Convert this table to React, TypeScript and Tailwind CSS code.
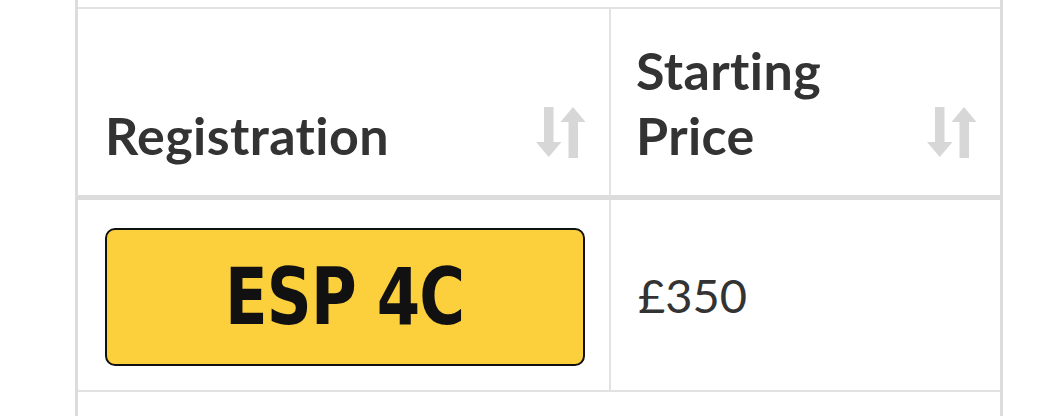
import React from "react";

function SortIcon() {
  return (
    <svg width="50" height="51" viewBox="0 0 50 51" className="absolute right-[23px] bottom-[37px]">
      <g fill="#d7d7d7">
        <rect x="8" y="0" width="9.5" height="37" />
        <polygon points="0,35 25.5,35 12.75,50" />
        <polygon points="37,0 49.5,15 24.5,15" />
        <rect x="32.5" y="14" width="9.5" height="37" />
      </g>
    </svg>
  );
}

export default function App() {
  const head = "font-['Lato','Open_Sans',sans-serif] font-bold text-[52px] tracking-[0.4px] leading-[65px] text-[#333333]";
  return (
    <div className="w-[1055px] h-[416px] bg-white overflow-hidden">
      <div className="ml-[75px] w-[928px] h-[416px] border-x-[3px] border-[#dcdcdc] pt-[7px]">
        <div className="border-t-2 border-[#e2e2e2]">
          <div className="flex h-[191px] border-b-[5px] border-[#dcdcdc]">
            <div className="relative w-[533px] shrink-0 flex items-end pl-[27px] pr-[27px] pb-[27px] border-r-2 border-[#e2e2e2]">
              <div className={head}>Registration</div>
              <SortIcon />
            </div>
            <div className="relative flex-1 flex items-end pl-[25px] pr-[27px] pb-[27px]">
              <div className={head}>
                Starting
                <br />
                Price
              </div>
              <SortIcon />
            </div>
          </div>
          <div className="flex h-[192px] border-b-2 border-[#e2e2e2]">
            <div className="w-[533px] shrink-0 flex items-start pl-[27px] pt-[28px] border-r-2 border-[#e2e2e2]">
              <div className="w-[480px] h-[138px] bg-[#fcd03c] border-[2.5px] border-[#111111] rounded-[10px] flex items-center justify-center">
                <span className="inline-block [transform:scaleX(0.8)] font-['DejaVu_Sans',sans-serif] font-bold text-[78px] leading-none text-[#111111] tracking-[-1px]">
                  ESP 4C
                </span>
              </div>
            </div>
            <div className="flex-1 flex items-center px-[27px]">
              <span className="font-['Lato','Open_Sans',sans-serif] text-[47px] text-[#333333]">£350</span>
            </div>
          </div>
        </div>
      </div>
    </div>
  );
}
